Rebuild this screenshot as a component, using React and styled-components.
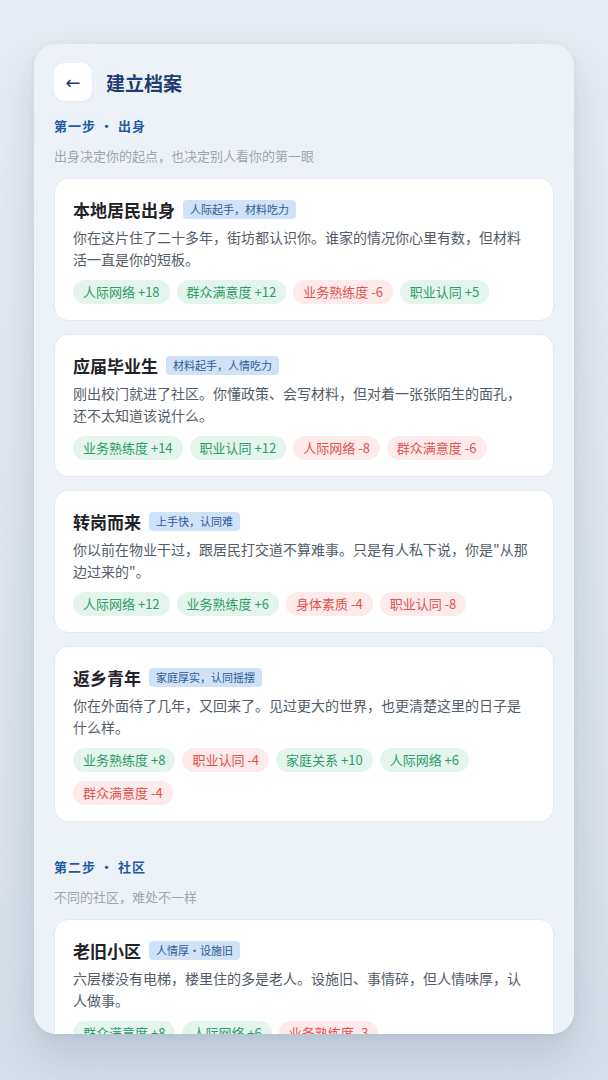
import React from 'react';
import styled, { createGlobalStyle } from 'styled-components';

const GlobalStyle = createGlobalStyle`
  html, body {
    margin: 0;
    padding: 0;
    height: 100%;
  }
  body {
    background: linear-gradient(180deg, #e6ecf3 0%, #d6dfe9 100%);
    font-family: "Noto Sans CJK SC", "Noto Sans", sans-serif;
    -webkit-font-smoothing: antialiased;
  }
`;

const Page = styled.div`
  display: flex;
  justify-content: center;
  padding-top: 44px;
  height: 1080px;
  box-sizing: border-box;
`;

const Panel = styled.div`
  width: 540px;
  height: 990px;
  background: #edf2f9;
  border-radius: 22px;
  box-shadow: 0 22px 44px rgba(40, 62, 95, 0.16), 0 2px 6px rgba(40, 62, 95, 0.06);
  overflow: hidden;
  padding: 19px 20px;
  box-sizing: border-box;
`;

const Header = styled.div`
  display: flex;
  align-items: center;
  gap: 14px;
`;

const BackButton = styled.button`
  width: 38px;
  height: 38px;
  border: none;
  border-radius: 10px;
  background: #ffffff;
  color: #1f3c6e;
  font-size: 18px;
  display: flex;
  align-items: center;
  justify-content: center;
  padding: 0;
  box-shadow: 0 1px 3px rgba(30, 50, 80, 0.06);
  font-family: "DejaVu Sans", sans-serif;
`;

const Title = styled.h1`
  margin: 0;
  font-size: 19px;
  font-weight: 700;
  color: #1f3c6e;
`;

const Section = styled.section`
  margin-top: ${p => p.$top}px;
`;

const StepLabel = styled.div`
  font-size: 13px;
  line-height: 18px;
  font-weight: 700;
  letter-spacing: 1px;
  color: #1f5ba3;
`;

const StepHint = styled.div`
  margin-top: 12px;
  font-size: 13px;
  line-height: 18px;
  color: #9ea6b0;
`;

const CardList = styled.div`
  margin-top: 13px;
  display: flex;
  flex-direction: column;
  gap: 13px;
`;

const Card = styled.div`
  background: #ffffff;
  border: 1px solid #e1e8f1;
  border-radius: 14px;
  padding: 18px 20px 16px 18px;
`;

const CardHead = styled.div`
  display: flex;
  align-items: center;
  gap: 8px;
  height: 24px;
`;

const CardTitle = styled.h2`
  margin: 0;
  font-size: 17px;
  font-weight: 700;
  color: #1f2329;
`;

const Badge = styled.span`
  background: #cfe2f7;
  color: #2d5c92;
  font-size: 11px;
  line-height: 19px;
  padding: 0 7px;
  border-radius: 4px;
`;

const Desc = styled.p`
  margin: 5px 0 0;
  font-size: 14px;
  line-height: 22px;
  color: #535c67;
`;

const Chips = styled.div`
  margin-top: 10px;
  display: flex;
  flex-wrap: wrap;
  gap: 9px 7px;
`;

const Chip = styled.span`
  height: 24px;
  line-height: 24px;
  padding: 0 10px;
  border-radius: 12px;
  font-size: 13px;
  white-space: pre;
  background: ${p => (p.$up ? '#e3f5ec' : '#fdeaea')};
  color: ${p => (p.$up ? '#2f9c68' : '#e2524f')};
`;

const origins = [
  {
    name: '本地居民出身',
    tag: '人际起手，材料吃力',
    text: '你在这片住了二十多年，街坊都认识你。谁家的情况你心里有数，但材料活一直是你的短板。',
    stats: [['人际网络', 18], ['群众满意度', 12], ['业务熟练度', -6], ['职业认同', 5]],
  },
  {
    name: '应届毕业生',
    tag: '材料起手，人情吃力',
    text: '刚出校门就进了社区。你懂政策、会写材料，但对着一张张陌生的面孔，还不太知道该说什么。',
    stats: [['业务熟练度', 14], ['职业认同', 12], ['人际网络', -8], ['群众满意度', -6]],
  },
  {
    name: '转岗而来',
    tag: '上手快，认同难',
    text: '你以前在物业干过，跟居民打交道不算难事。只是有人私下说，你是"从那边过来的"。',
    stats: [['人际网络', 12], ['业务熟练度', 6], ['身体素质', -4], ['职业认同', -8]],
  },
  {
    name: '返乡青年',
    tag: '家庭厚实，认同摇摆',
    text: '你在外面待了几年，又回来了。见过更大的世界，也更清楚这里的日子是什么样。',
    stats: [['业务熟练度', 8], ['职业认同', -4], ['家庭关系', 10], ['人际网络', 6], ['群众满意度', -4]],
  },
];

const communities = [
  {
    name: '老旧小区',
    tag: '人情厚·设施旧',
    text: '六层楼没有电梯，楼里住的多是老人。设施旧、事情碎，但人情味厚，认人做事。',
    stats: [['群众满意度', 8], ['人际网络', 6], ['业务熟练度', -3]],
  },
];

const OptionCard = ({ item }) => (
  <Card>
    <CardHead>
      <CardTitle>{item.name}</CardTitle>
      <Badge>{item.tag}</Badge>
    </CardHead>
    <Desc>{item.text}</Desc>
    <Chips>
      {item.stats.map(([label, value]) => (
        <Chip key={label} $up={value > 0}>
          {label} {value > 0 ? `+${value}` : value}
        </Chip>
      ))}
    </Chips>
  </Card>
);

const App = () => (
  <>
    <GlobalStyle />
    <Page>
      <Panel>
        <Header>
          <BackButton>←</BackButton>
          <Title>建立档案</Title>
        </Header>

        <Section $top={16}>
          <StepLabel>第一步 · 出身</StepLabel>
          <StepHint>出身决定你的起点，也决定别人看你的第一眼</StepHint>
          <CardList>
            {origins.map(item => <OptionCard key={item.name} item={item} />)}
          </CardList>
        </Section>

        <Section $top={36}>
          <StepLabel>第二步 · 社区</StepLabel>
          <StepHint>不同的社区，难处不一样</StepHint>
          <CardList>
            {communities.map(item => <OptionCard key={item.name} item={item} />)}
          </CardList>
        </Section>
      </Panel>
    </Page>
  </>
);

export default App;
